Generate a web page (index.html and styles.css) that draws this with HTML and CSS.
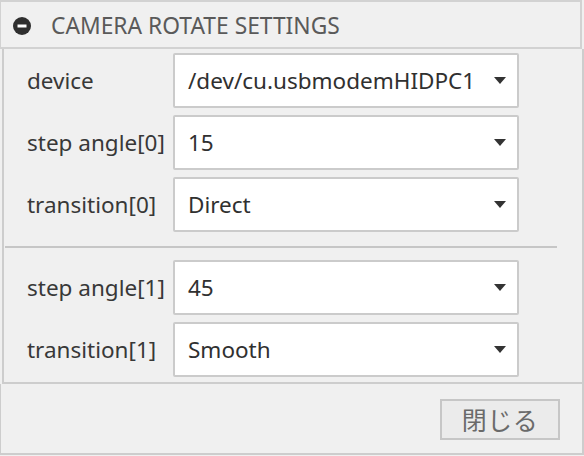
FILE: index.html
```html
<!DOCTYPE html>
<html lang="ja">
<head>
    <meta charset="UTF-8">
    <title>Camera Rotate Settings</title>
    <link rel="stylesheet" href="styles.css">
</head>
<body>
    <div class="dialog">
        <div class="dialog-header">
            <svg class="collapse-icon" width="18" height="18" viewBox="0 0 18 18">
                <circle cx="9" cy="9" r="9" fill="#2f2f2f"/>
                <rect x="4.5" y="7.5" width="9" height="3" fill="#fff"/>
            </svg>
            <span class="dialog-title">CAMERA ROTATE SETTINGS</span>
        </div>

        <div class="dialog-body">
            <div class="field">
                <label class="field-label">device</label>
                <div class="select-box">
                    <span class="select-value">/dev/cu.usbmodemHIDPC1</span>
                    <span class="select-arrow"></span>
                </div>
            </div>
            <div class="field">
                <label class="field-label">step angle[0]</label>
                <div class="select-box">
                    <span class="select-value">15</span>
                    <span class="select-arrow"></span>
                </div>
            </div>
            <div class="field">
                <label class="field-label">transition[0]</label>
                <div class="select-box">
                    <span class="select-value">Direct</span>
                    <span class="select-arrow"></span>
                </div>
            </div>

            <hr class="divider">

            <div class="field">
                <label class="field-label">step angle[1]</label>
                <div class="select-box">
                    <span class="select-value">45</span>
                    <span class="select-arrow"></span>
                </div>
            </div>
            <div class="field">
                <label class="field-label">transition[1]</label>
                <div class="select-box">
                    <span class="select-value">Smooth</span>
                    <span class="select-arrow"></span>
                </div>
            </div>
        </div>

        <div class="dialog-footer">
            <button class="close-button">閉じる</button>
        </div>
    </div>
</body>
</html>
```

FILE: styles.css
```css
body {
    margin: 0;
    padding: 0;
    background: #f0f0f0;
    font-family: 'Noto Sans', 'Noto Sans CJK JP', sans-serif;
}

.dialog {
    width: 584px;
    height: 456px;
    background: #f0f0f0;
}

.dialog-header {
    display: flex;
    align-items: center;
    gap: 20px;
    width: 582px;
    height: 49px;
    box-sizing: border-box;
    padding: 1px 0 0 12px;
    border: 2px solid #d2d2d2;
    border-left-width: 1px;
    background: #f0f0f0;
}

.collapse-icon {
    flex-shrink: 0;
    margin-top: 2px;
}

.dialog-title {
    color: #5a5a5a;
    font-size: 22.8px;
}

.dialog-body {
    margin-left: 2px;
    width: 582px;
    box-sizing: border-box;
    padding: 4px 0 5px 0;
    border: 2px solid #cdcdcd;
    border-top: none;
    display: flex;
    flex-direction: column;
    gap: 7px;
}

.field {
    display: flex;
    align-items: center;
    height: 55px;
}

.field-label {
    width: 146px;
    padding-left: 23px;
    color: #383838;
    font-size: 22.5px;
}

.select-box {
    display: flex;
    align-items: center;
    justify-content: space-between;
    width: 346px;
    height: 55px;
    box-sizing: border-box;
    padding: 0 11px 1px 13px;
    background: #fff;
    border: 2px solid #cbcbcb;
    border-radius: 2px;
}

.select-value {
    color: #303030;
    font-size: 22.5px;
}

.select-arrow {
    width: 0;
    height: 0;
    border-left: 6px solid transparent;
    border-right: 6px solid transparent;
    border-top: 7px solid #333;
}

.divider {
    margin: 7px 25px 5px 1px;
    height: 0;
    border: none;
    border-top: 2px solid #c6c6c6;
}

.dialog-footer {
    display: flex;
    justify-content: flex-end;
    align-items: center;
    width: 584px;
    height: 71px;
    box-sizing: border-box;
    padding: 0 22px 0 0;
    border: 2px solid #cdcdcd;
    border-top: none;
    border-left-width: 1px;
}

.close-button {
    width: 120px;
    height: 41px;
    margin-top: 1px;
    background: #ebebeb;
    border: 2px solid #c6c6c6;
    color: #6a6a6a;
    font-family: 'Noto Sans CJK JP', sans-serif;
    font-size: 25px;
    letter-spacing: 0.5px;
    padding: 0 0 3px 0;
}
```
